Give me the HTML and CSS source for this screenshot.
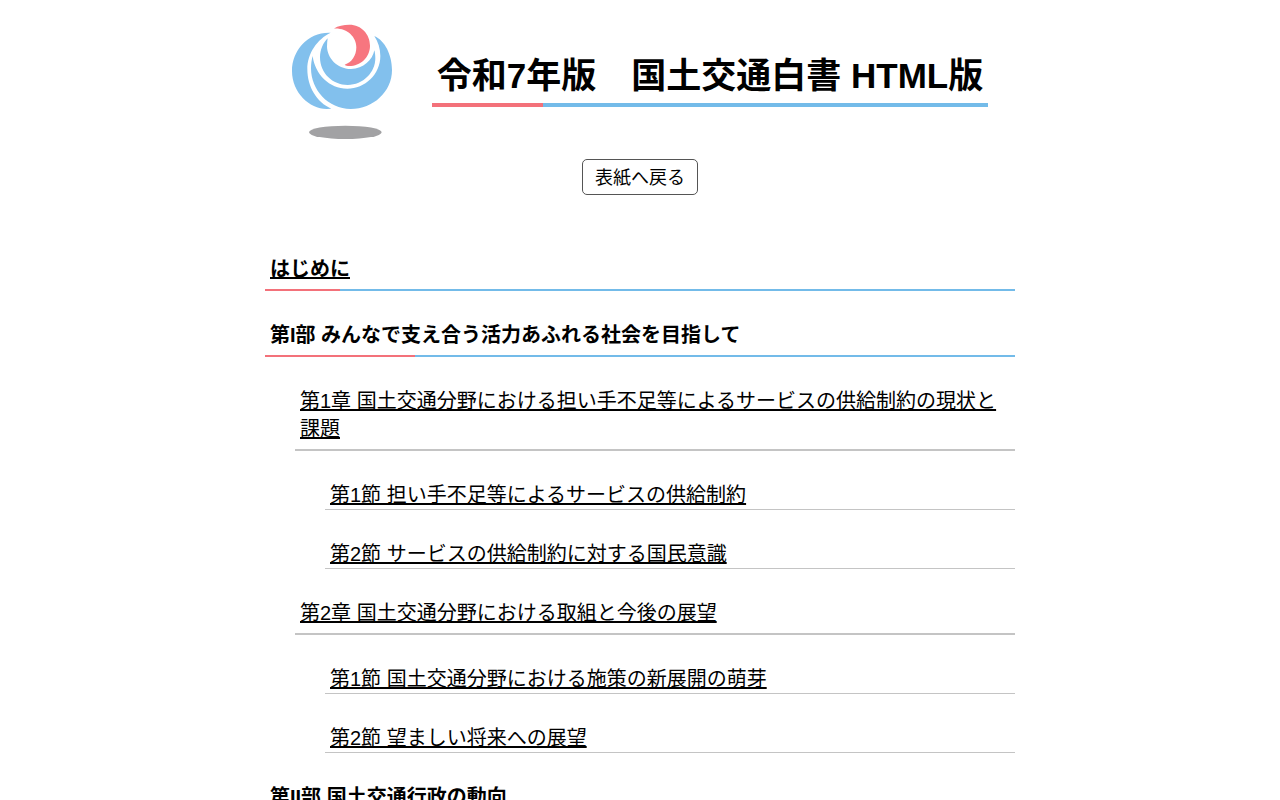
FILE: index.html
```html
<!DOCTYPE html>
<html lang="ja">
<head>
  <meta charset="UTF-8">
  <meta name="viewport" content="width=device-width, initial-scale=1.0">
  <title>令和7年版 国土交通白書 HTML版</title>
  <link rel="stylesheet" href="styles.css">
</head>
<body>
  <div class="container">
    <header class="header">
      <svg class="logo" viewBox="36 27 300 345" role="img" aria-label="国土交通省">
        <g fill="#82c0ed">
          <path d="M152 53C85 50 36 105 36 168C36 232 88 282 140 282L154 281C110 262 82 215 82 162C82 115 112 72 152 53Z"/>
          <path d="M143 70C130 82 120 105 120 127C120 175 158 210 203 210C250 210 286 172 286 130C286 120 285 113 283 106C278 135 250 161 213 162C170 161 142 128 141 95C141 86 142 78 143 70Z"/>
          <path d="M283 63C315 77 336 120 336 165C336 230 280 282 212 282C145 282 93 225 93 160C93 146 95 133 98 123C105 178 148 221 202 221C255 221 301 178 301 123C301 100 294 80 283 63Z"/>
        </g>
        <path fill="#f7767f" d="M161 41C175 32 190 29 208 29C245 29 270 58 270 92C270 128 240 153 208 153C202 153 198 152 194 149C215 143 229 122 229 97C229 65 200 38 161 41Z"/>
        <ellipse fill="#a2a2a4" cx="196" cy="352" rx="109" ry="20"/>
      </svg>
      <h1>令和7年版　国土交通白書 HTML版</h1>
    </header>

    <div class="back">
      <button type="button">表紙へ戻る</button>
    </div>

    <main class="contents">
      <h2 class="intro"><a href="#">はじめに</a></h2>

      <h2 class="part">第I部 みんなで支え合う活力あふれる社会を目指して</h2>
      <h3 class="chapter"><a href="#">第1章 国土交通分野における担い手不足等によるサービスの供給制約の現状と課題</a></h3>
      <h4 class="section"><a href="#">第1節 担い手不足等によるサービスの供給制約</a></h4>
      <h4 class="section"><a href="#">第2節 サービスの供給制約に対する国民意識</a></h4>
      <h3 class="chapter"><a href="#">第2章 国土交通分野における取組と今後の展望</a></h3>
      <h4 class="section"><a href="#">第1節 国土交通分野における施策の新展開の萌芽</a></h4>
      <h4 class="section"><a href="#">第2節 望ましい将来への展望</a></h4>

      <h2 class="part">第II部 国土交通行政の動向</h2>
    </main>
  </div>
</body>
</html>
```
FILE: styles.css
```css
body {
  margin: 0;
  background: #fff;
  color: #000;
  font-family: "Liberation Sans", "Noto Sans CJK JP", sans-serif;
  font-size: 20px;
  line-height: 28px;
}
.container {
  max-width: 750px;
  margin: 0 auto;
  padding: 24px 20px 0;
}
a {
  color: #000;
  text-decoration: underline;
}
.header {
  display: flex;
  justify-content: center;
  align-items: center;
  gap: 40px;
}
.logo {
  flex: none;
  width: 100px;
  height: 115px;
}
h1 {
  margin: 0;
  padding: 0 5px 11px;
  font-size: 35px;
  line-height: 40px;
  background: linear-gradient(to right, #f3717a 20%, #73bbe9 20%) bottom / 100% 4px no-repeat;
}
.back {
  margin: 20px 0 60px;
  text-align: center;
}
button {
  display: block;
  height: 36px;
  margin: 0 auto;
  padding: 0 12px 2px;
  border: 1px solid #555;
  border-radius: 5px;
  background: #fff;
  color: #000;
  font-family: inherit;
  font-size: 18px;
  cursor: pointer;
}
button:hover {
  background: #eee;
}
h2, h3, h4 {
  margin: 0 0 30px;
  font-size: 20px;
}
h3, h4 {
  font-weight: normal;
}
.intro, .part {
  padding: 0 5px 8px;
}
.intro {
  background: linear-gradient(to right, #f3717a 10%, #73bbe9 10%) bottom / 100% 2px no-repeat;
}
.part {
  background: linear-gradient(to right, #f3717a 20%, #73bbe9 20%) bottom / 100% 2px no-repeat;
}
.chapter {
  margin-left: 30px;
  padding: 0 5px 6px;
  border-bottom: 2px solid #c4c4c4;
}
.section {
  margin-left: 60px;
  padding: 0 5px;
  border-bottom: 1px solid #c4c4c4;
}
```
